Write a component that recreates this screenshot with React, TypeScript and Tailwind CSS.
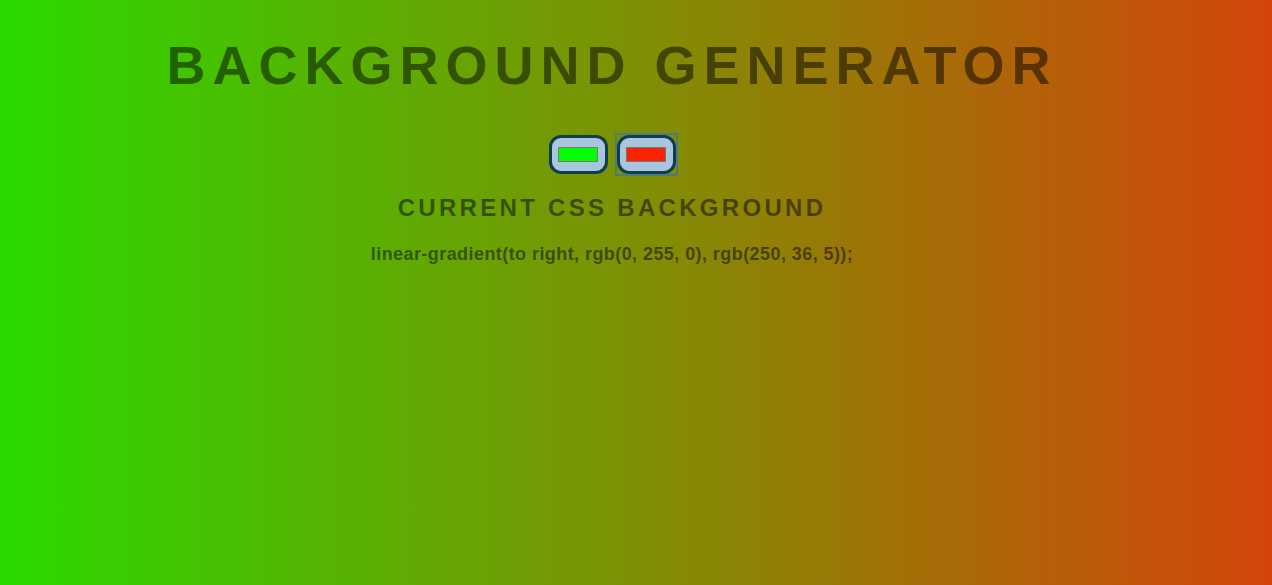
import React from "react";

function Swatch({ color, focused }: { color: string; focused?: boolean }) {
  const inner = (
    <div className="flex h-[39px] w-[59px] items-center justify-center rounded-[12px] border-[3px] border-[#123d4f] bg-[#a8c6de]">
      <div className="h-[15px] w-[40px] border border-[#777777]" style={{ backgroundColor: color }} />
    </div>
  );
  if (focused) {
    return <div className="outline-2 outline-[#3f7a95]/80 outline-solid">{inner}</div>;
  }
  return inner;
}

export default function App() {
  return (
    <div
      className="flex h-[585px] w-full flex-col items-center pr-[48px] pt-[38px] font-bold"
      style={{
        fontFamily: '"Liberation Sans", Arial, sans-serif',
        background: "linear-gradient(to right, #2ada00, #d3450a)",
      }}
    >
      <h1 className="text-[54px] leading-[54px] tracking-[7px] text-black/50">BACKGROUND GENERATOR</h1>
      <div className="mt-[43px] flex gap-[9px]">
        <Swatch color="#00ff00" />
        <Swatch color="#fa2405" focused />
      </div>
      <h3 className="mt-[22px] text-[24px] leading-[24px] tracking-[3.3px] text-black/50">CURRENT CSS BACKGROUND</h3>
      <p className="mt-[25px] text-[18px] leading-[18px] tracking-[0.43px] text-black/50">
        linear-gradient(to right, rgb(0, 255, 0), rgb(250, 36, 5));
      </p>
    </div>
  );
}
